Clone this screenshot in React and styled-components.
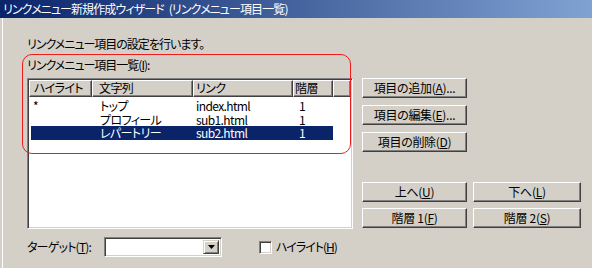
import React from 'react';
import styled, { createGlobalStyle } from 'styled-components';

const GlobalStyle = createGlobalStyle`
  html, body {
    margin: 0;
    padding: 0;
    background: #d4d0c8;
  }
  body {
    font-family: "Noto Sans CJK JP", "Liberation Sans", sans-serif;
    font-size: 12px;
    font-feature-settings: "palt";
    color: #000;
  }
`;

const Window = styled.div`
  width: 592px;
  height: 268px;
  overflow: hidden;
  background: #d4d0c8;
  display: flex;
  flex-direction: column;
`;

const TitleBar = styled.div`
  height: 18px;
  flex: none;
  display: flex;
  align-items: center;
  gap: 5px;
  padding-left: 3px;
  color: #fff;
  font-size: 12px;
  line-height: 18px;
  letter-spacing: -0.9px;
  white-space: nowrap;
  background: linear-gradient(to right, #0a246a, #80a2d2);
`;

const Body = styled.div`
  flex: 1;
  display: flex;
  flex-direction: column;
  margin-left: 2px;
  border-left: 1px solid #fff;
  padding: 19px 0 0 24px;
`;

const Text = styled.div`
  line-height: 14px;
  height: 14px;
  white-space: nowrap;
  letter-spacing: ${({ $tight }) => ($tight ? '-1px' : '0')};
`;

const Main = styled.div`
  display: flex;
  gap: 9px;
  margin-top: 7px;
  position: relative;
`;

const LeftPane = styled.div`
  display: flex;
  flex-direction: column;
  gap: 6px;
`;

const RedFrame = styled.div`
  position: absolute;
  left: -5px;
  top: -4px;
  width: 327px;
  height: 98px;
  border: 1px solid #ee1c1c;
  border-radius: 10px;
  pointer-events: none;
  z-index: 2;
`;

const ListView = styled.div`
  width: 326px;
  height: 151px;
  box-sizing: border-box;
  background: #fff;
  border-top: 1px solid #808080;
  border-left: 1px solid #808080;
  border-right: 1px solid #fff;
  border-bottom: 1px solid #fff;
  box-shadow: inset 1px 1px 0 #404040, inset -1px -1px 0 #d4d0c8;
  padding: 1px;
  display: flex;
  flex-direction: column;
`;

const HeaderRow = styled.div`
  display: grid;
  grid-template-columns: 63px 101px 100px 40px 1fr;
  height: 17px;
  flex: none;
`;

const HeaderCell = styled.div`
  background: #d4d0c8;
  box-sizing: border-box;
  border-top: 1px solid #fff;
  border-left: 1px solid #fff;
  border-right: 1px solid #404040;
  border-bottom: 1px solid #404040;
  box-shadow: inset -1px -1px 0 #808080;
  padding-left: ${({ $pad }) => $pad}px;
  line-height: 14px;
  letter-spacing: -0.6px;
  white-space: nowrap;
  overflow: hidden;
`;

const Rows = styled.div`
  padding-top: 2px;
  display: flex;
  flex-direction: column;
`;

const Row = styled.div`
  display: grid;
  grid-template-columns: 2px 61px 101px 100px 40px;
  height: 13.5px;
  line-height: 13.5px;
  color: ${({ $selected }) => ($selected ? '#fff' : '#000')};
`;

const Cell = styled.div`
  padding-left: ${({ $pad }) => $pad}px;
  white-space: nowrap;
  letter-spacing: -0.6px;
  background: ${({ $selected }) => ($selected ? '#0a246a' : 'transparent')};
`;

const RightPane = styled.div`
  display: flex;
  flex-direction: column;
  padding-top: 20px;
`;

const ButtonStack = styled.div`
  display: flex;
  flex-direction: column;
  gap: 7px;
`;

const ButtonGrid = styled.div`
  display: grid;
  grid-template-columns: 105px 108px;
  grid-auto-rows: 20px;
  column-gap: 6px;
  row-gap: 6px;
  margin-top: 30px;
`;

const Button = styled.div`
  width: ${({ $w }) => ($w ? `${$w}px` : 'auto')};
  height: 20px;
  box-sizing: border-box;
  background: #d4d0c8;
  border-top: 1px solid #fff;
  border-left: 1px solid #fff;
  border-right: 1px solid #404040;
  border-bottom: 1px solid #404040;
  box-shadow: inset -1px -1px 0 #808080;
  display: flex;
  align-items: center;
  justify-content: center;
  line-height: 14px;
  letter-spacing: -0.3px;
  white-space: nowrap;
`;

const U = styled.span`
  text-decoration: underline;
`;

const BottomRow = styled.div`
  display: flex;
  align-items: center;
  margin-top: 8px;
  height: 20px;
`;

const FieldLabel = styled.div`
  width: 77px;
  line-height: 14px;
  white-space: nowrap;
  letter-spacing: -0.8px;
`;

const Combo = styled.div`
  width: 118px;
  height: 20px;
  box-sizing: border-box;
  background: #fff;
  border-top: 1px solid #808080;
  border-left: 1px solid #808080;
  border-right: 1px solid #fff;
  border-bottom: 1px solid #fff;
  box-shadow: inset 1px 1px 0 #404040, inset -1px -1px 0 #d4d0c8;
  display: flex;
  justify-content: flex-end;
  padding: 2px;
`;

const ComboArrow = styled.div`
  width: 16px;
  height: 14px;
  box-sizing: border-box;
  background: #d4d0c8;
  border-top: 1px solid #d4d0c8;
  border-left: 1px solid #d4d0c8;
  border-right: 1px solid #404040;
  border-bottom: 1px solid #404040;
  box-shadow: inset 1px 1px 0 #fff, inset -1px -1px 0 #808080;
  display: flex;
  align-items: center;
  justify-content: center;
`;

const Check = styled.div`
  width: 13px;
  height: 13px;
  box-sizing: border-box;
  margin-left: 37px;
  margin-right: 4px;
  background: #fff;
  border-top: 1px solid #808080;
  border-left: 1px solid #808080;
  border-right: 1px solid #fff;
  border-bottom: 1px solid #fff;
  box-shadow: inset 1px 1px 0 #404040, inset -1px -1px 0 #d4d0c8;
`;

const items = [
  { mark: '*', name: 'トップ', link: 'index.html', level: '1' },
  { mark: '', name: 'プロフィール', link: 'sub1.html', level: '1' },
  { mark: '', name: 'レパートリー', link: 'sub2.html', level: '1', selected: true },
];

export default function App() {
  return (
    <Window>
      <GlobalStyle />
      <TitleBar>
        <span>リンクメニュー新規作成ウィザード</span>
        <span>(リンクメニュー項目一覧)</span>
      </TitleBar>
      <Body>
        <Text $tight>リンクメニュー項目の設定を行います。</Text>
        <Main>
          <RedFrame />
          <LeftPane>
            <Text $tight>
              リンクメニュー項目一覧(<U>I</U>):
            </Text>
            <ListView>
              <HeaderRow>
                <HeaderCell $pad={4}>ハイライト</HeaderCell>
                <HeaderCell $pad={6}>文字列</HeaderCell>
                <HeaderCell $pad={2}>リンク</HeaderCell>
                <HeaderCell $pad={1}>階層</HeaderCell>
                <HeaderCell $pad={0} />
              </HeaderRow>
              <Rows>
                {items.map((it) => (
                  <Row key={it.name} $selected={it.selected}>
                    <Cell />
                    <Cell $pad={2} $selected={it.selected}>{it.mark}</Cell>
                    <Cell $pad={8} $selected={it.selected}>{it.name}</Cell>
                    <Cell $pad={3} $selected={it.selected}>{it.link}</Cell>
                    <Cell $pad={6} $selected={it.selected}>{it.level}</Cell>
                  </Row>
                ))}
              </Rows>
            </ListView>
          </LeftPane>
          <RightPane>
            <ButtonStack>
              <Button $w={105}>
                項目の追加(<U>A</U>)...
              </Button>
              <Button $w={105}>
                項目の編集(<U>E</U>)...
              </Button>
              <Button $w={105}>
                項目の削除(<U>D</U>)
              </Button>
            </ButtonStack>
            <ButtonGrid>
              <Button>
                上へ(<U>U</U>)
              </Button>
              <Button>
                下へ(<U>L</U>)
              </Button>
              <Button>
                階層 1(<U>F</U>)
              </Button>
              <Button>
                階層 2(<U>S</U>)
              </Button>
            </ButtonGrid>
          </RightPane>
        </Main>
        <BottomRow>
          <FieldLabel>
            ターゲット(<U>T</U>):
          </FieldLabel>
          <Combo>
            <ComboArrow>
              <svg width="7" height="4" viewBox="0 0 7 4">
                <path d="M0 0h7L3.5 4z" fill="#000" />
              </svg>
            </ComboArrow>
          </Combo>
          <Check />
          <Text $tight>
            ハイライト(<U>H</U>)
          </Text>
        </BottomRow>
      </Body>
    </Window>
  );
}
